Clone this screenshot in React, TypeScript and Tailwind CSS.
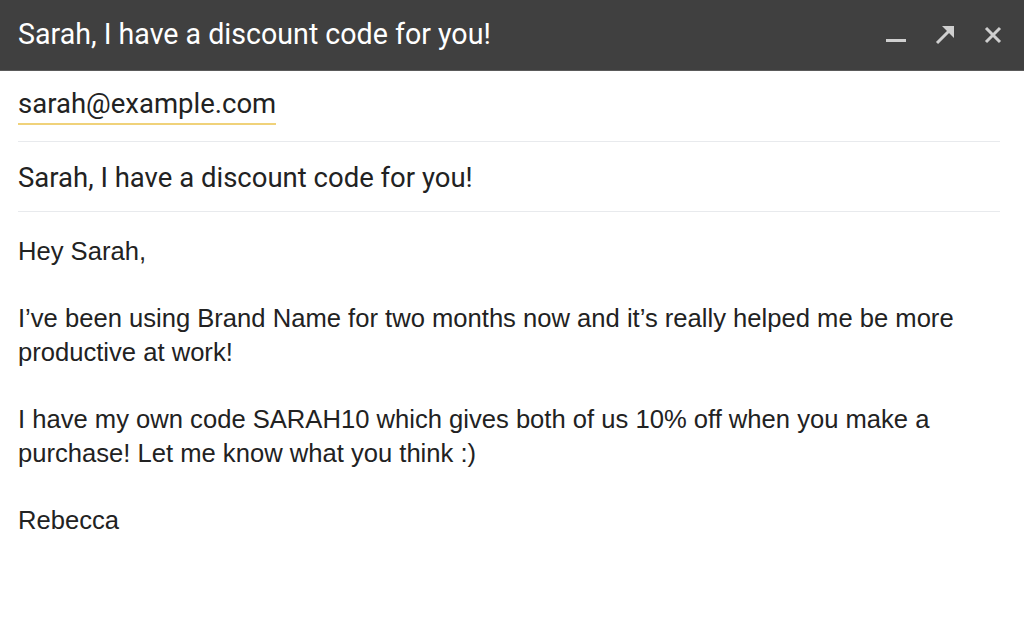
import React from "react";

export default function App() {
  return (
    <div className="w-[1024px] h-[624px] bg-white overflow-hidden">
      <div className="h-[71px] bg-[#404040] flex items-center justify-between pl-[18px] pr-[22px] border-b border-[#5a5a5a]">
        <div className="text-white text-[28.6px] font-[Roboto,sans-serif] leading-[34px] pb-[2px]">
          Sarah, I have a discount code for you!
        </div>
        <div className="flex items-center gap-[28px] text-[#cfcfcf]">
          <svg width="20" height="20" viewBox="0 0 20 20" className="mt-[2px]">
            <rect x="0" y="13" width="20" height="3" fill="#cfcfcf" />
          </svg>
          <svg width="22" height="22" viewBox="0 0 22 22">
            <path d="M3 19 L17 5" stroke="#cfcfcf" strokeWidth="3" fill="none" />
            <path d="M8 2 H20 V14 Z" fill="#cfcfcf" />
          </svg>
          <svg width="18" height="18" viewBox="0 0 18 18">
            <path d="M2 2 L16 16 M16 2 L2 16" stroke="#cfcfcf" strokeWidth="3" fill="none" />
          </svg>
        </div>
      </div>
      <div className="px-[18px] pr-[24px] font-[Roboto,sans-serif] text-[#222]">
        <div className="h-[71px] flex items-start pt-[17px] border-b border-[#e8eaed]">
          <span className="text-[27.5px] leading-[32px] pb-[3px] border-b-2 border-[#f0d27a]">sarah@example.com</span>
        </div>
        <div className="h-[70px] flex items-center border-b border-[#e8eaed] text-[27.5px] pt-[2px]">
          Sarah, I have a discount code for you!
        </div>
      </div>
      <div
        className="pl-[18px] pr-[24px] pt-[23px] text-[25.6px] leading-[33.6px] text-[#222]"
        style={{ fontFamily: '"Liberation Sans", Arial, sans-serif' }}
      >
        <div>Hey Sarah,</div>
        <div><br /></div>
        <div>I’ve been using Brand Name for two months now and it’s really helped me be more productive at work!</div>
        <div><br /></div>
        <div>I have my own code SARAH10 which gives both of us 10% off when you make a purchase! Let me know what you think :)</div>
        <div><br /></div>
        <div>Rebecca</div>
      </div>
    </div>
  );
}
